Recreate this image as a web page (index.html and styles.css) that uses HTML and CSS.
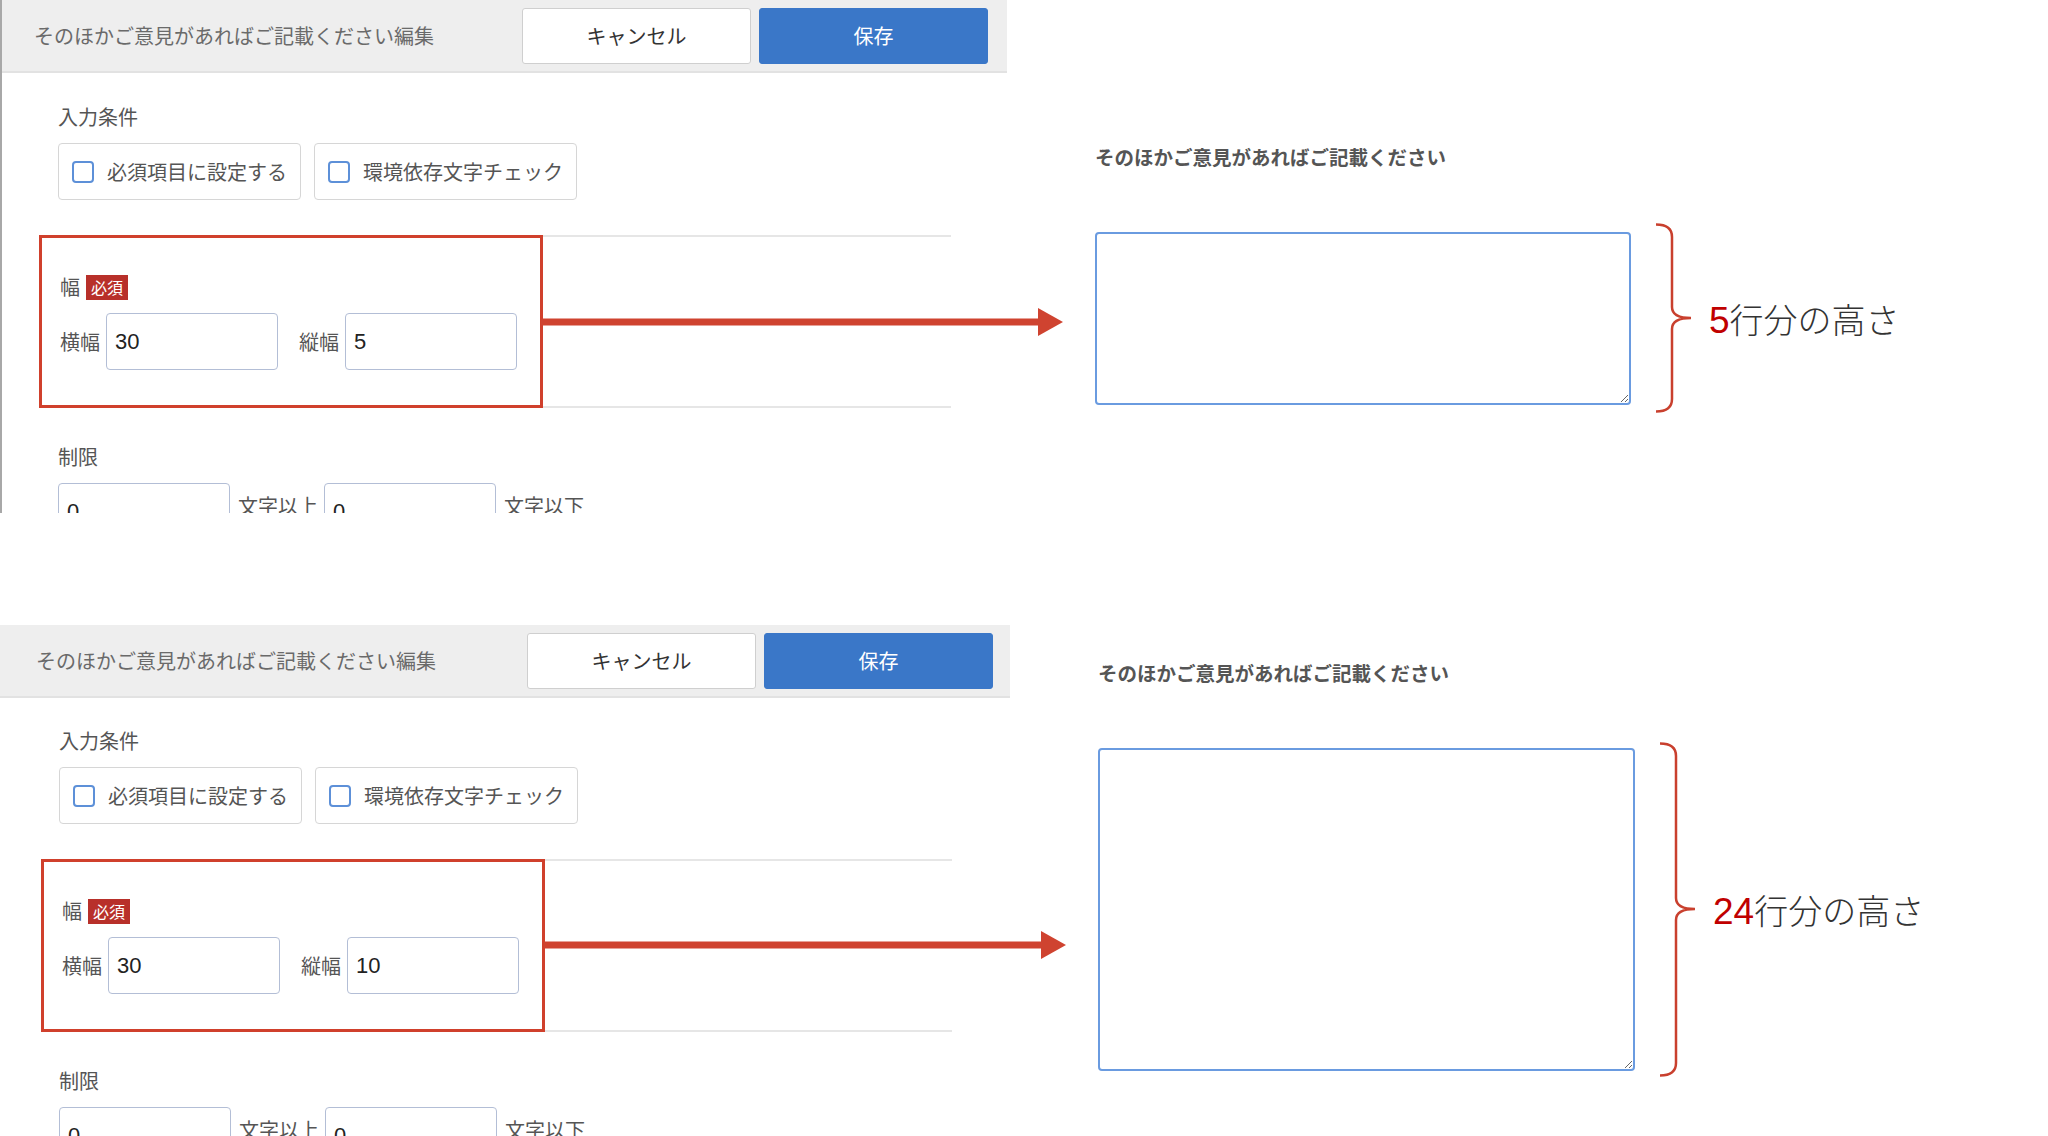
FILE: index.html
```html
<!DOCTYPE html>
<html lang="ja">
<head>
    <meta charset="UTF-8">
    <title>複数行テキストの幅と高さ</title>
    <link rel="stylesheet" href="styles.css">
</head>
<body>
    <main class="page">

        <!-- 縦幅 5 の場合 -->
        <section class="case">
            <div class="editor editor-framed">
                <div class="editor-head">
                    <span class="editor-title">そのほかご意見があればご記載ください編集</span>
                    <div class="head-actions">
                        <button class="btn btn-cancel">キャンセル</button>
                        <button class="btn btn-save">保存</button>
                    </div>
                </div>
                <div class="editor-body">
                    <div class="group-label">入力条件</div>
                    <div class="checks">
                        <label class="check"><span class="check-box"></span>必須項目に設定する</label>
                        <label class="check"><span class="check-box"></span>環境依存文字チェック</label>
                    </div>
                    <div class="size-row">
                        <div class="size-box">
                            <div class="size-title">幅<span class="req">必須</span></div>
                            <div class="size-fields">
                                <span class="field-label">横幅</span>
                                <input class="field" type="text" value="30">
                                <span class="field-label">縦幅</span>
                                <input class="field" type="text" value="5">
                            </div>
                        </div>
                    </div>
                    <div class="group-label group-limit">制限</div>
                    <div class="limit-fields">
                        <input class="field" type="text" value="0">
                        <span class="field-label">文字以上</span>
                        <input class="field" type="text" value="0">
                        <span class="field-label">文字以下</span>
                    </div>
                </div>
            </div>

            <div class="preview">
                <div class="preview-label">そのほかご意見があればご記載ください</div>
                <div class="preview-row">
                    <textarea class="preview-input"></textarea>
                    <svg class="brace" width="38" height="190" viewBox="0 0 38 190">
                        <path d="M1 1.5 Q17 1.5 17 14 V84 Q17 95 36 95 Q17 95 17 106 V176 Q17 188.5 1 188.5" />
                    </svg>
                    <div class="rows-note"><span class="rows-num">5</span>行分の高さ</div>
                </div>
            </div>

            <svg class="arrow" width="522" height="28" viewBox="0 0 522 28">
                <rect x="0" y="10.5" width="499" height="7" />
                <polygon points="497,0 522,14 497,28" />
            </svg>
        </section>

        <!-- 縦幅 10 の場合 -->
        <section class="case case-tall">
            <div class="editor">
                <div class="editor-head">
                    <span class="editor-title">そのほかご意見があればご記載ください編集</span>
                    <div class="head-actions">
                        <button class="btn btn-cancel">キャンセル</button>
                        <button class="btn btn-save">保存</button>
                    </div>
                </div>
                <div class="editor-body">
                    <div class="group-label">入力条件</div>
                    <div class="checks">
                        <label class="check"><span class="check-box"></span>必須項目に設定する</label>
                        <label class="check"><span class="check-box"></span>環境依存文字チェック</label>
                    </div>
                    <div class="size-row">
                        <div class="size-box">
                            <div class="size-title">幅<span class="req">必須</span></div>
                            <div class="size-fields">
                                <span class="field-label">横幅</span>
                                <input class="field" type="text" value="30">
                                <span class="field-label">縦幅</span>
                                <input class="field" type="text" value="10">
                            </div>
                        </div>
                    </div>
                    <div class="group-label group-limit">制限</div>
                    <div class="limit-fields">
                        <input class="field" type="text" value="0">
                        <span class="field-label">文字以上</span>
                        <input class="field" type="text" value="0">
                        <span class="field-label">文字以下</span>
                    </div>
                </div>
            </div>

            <div class="preview">
                <div class="preview-label">そのほかご意見があればご記載ください</div>
                <div class="preview-row">
                    <textarea class="preview-input"></textarea>
                    <svg class="brace" width="38" height="335" viewBox="0 0 38 335">
                        <path d="M1 1.5 Q17 1.5 17 14 V156 Q17 167 36 167 Q17 167 17 178 V321 Q17 333.5 1 333.5" />
                    </svg>
                    <div class="rows-note"><span class="rows-num">24</span>行分の高さ</div>
                </div>
            </div>

            <svg class="arrow" width="522" height="28" viewBox="0 0 522 28">
                <rect x="0" y="10.5" width="499" height="7" />
                <polygon points="497,0 522,14 497,28" />
            </svg>
        </section>

    </main>
</body>
</html>
```

FILE: styles.css
```css
/* General */
body {
    margin: 0;
    padding: 0;
    height: 1136px;
    overflow: hidden;
    background: #fff;
    font-family: "Noto Sans CJK JP", sans-serif;
    color: #555;
}

.page {
    display: flex;
    flex-direction: column;
    gap: 112px;
}

.case {
    position: relative;
    display: flex;
    height: 513px;
}

.case-tall {
    height: 520px;
}

/* Editor screenshot */
.editor {
    width: 1007px;
    flex-shrink: 0;
    overflow: hidden;
    box-sizing: border-box;
}

.editor-framed {
    border-left: 2px solid #a8a8a8;
}

.case-tall .editor {
    width: 1010px;
}

.editor-head {
    display: flex;
    align-items: center;
    justify-content: space-between;
    height: 71px;
    padding: 0 19px 0 32px;
    background: #eeeeee;
    border-bottom: 2px solid #e2e2e2;
}

.case-tall .editor-head {
    padding-left: 36px;
    padding-right: 17px;
}

.editor-title {
    font-size: 20px;
    color: #6a6a6a;
}

.head-actions {
    display: flex;
    gap: 8px;
}

.btn {
    width: 229px;
    height: 56px;
    font-family: inherit;
    font-size: 20px;
    border-radius: 3px;
    cursor: pointer;
}

.btn-cancel {
    background: #fff;
    color: #333;
    border: 1px solid #cfcfcf;
}

.btn-save {
    background: #3a77c8;
    color: #fff;
    border: 1px solid #3a77c8;
}

.editor-body {
    padding: 30px 0 0 56px;
}

.case-tall .editor-body {
    padding: 29px 0 0 59px;
}

.group-label {
    font-size: 20px;
    line-height: 28px;
    color: #555;
}

.checks {
    display: flex;
    gap: 13px;
    margin-top: 12px;
}

.check {
    display: flex;
    align-items: center;
    gap: 13px;
    height: 57px;
    padding: 0 13px;
    border: 1px solid #d6d6d6;
    border-radius: 4px;
    font-size: 20px;
    color: #555;
    box-sizing: border-box;
}

.check-box {
    width: 22px;
    height: 22px;
    border: 2px solid #5d90d8;
    border-radius: 4px;
    box-sizing: border-box;
}

/* Width / height section */
.size-row {
    width: 893px;
    margin-top: 35px;
    border-top: 2px solid #e6e6e6;
    border-bottom: 2px solid #e6e6e6;
}

.size-box {
    width: 504px;
    height: 173px;
    margin: -2px 0 -2px -19px;
    padding: 35px 0 0 18px;
    border: 3px solid #d0402c;
    box-sizing: border-box;
}

.case-tall .size-box {
    margin-left: -18px;
}

.size-title {
    display: flex;
    align-items: center;
    gap: 6px;
    font-size: 20px;
    line-height: 28px;
}

.req {
    display: inline-block;
    height: 25px;
    padding: 0 5px;
    background: #b8302a;
    color: #fff;
    font-size: 16px;
    line-height: 25px;
}

.size-fields,
.limit-fields {
    display: flex;
    align-items: center;
    margin-top: 12px;
}

.field-label {
    font-size: 20px;
    color: #555;
    white-space: nowrap;
}

.field {
    width: 172px;
    height: 57px;
    padding: 0 8px;
    border: 1.5px solid #b3bed6;
    border-radius: 4px;
    font-family: "Liberation Sans", sans-serif;
    font-size: 22px;
    color: #222;
    box-sizing: border-box;
    outline: none;
}

.size-fields .field {
    margin: 0 21px 0 6px;
}

.group-limit {
    margin-top: 35px;
}

.limit-fields {
    align-items: flex-start;
}

.limit-fields .field {
    margin-right: 8px;
}

.limit-fields .field-label {
    margin: 8px 6px 0 0;
}

/* Preview of the field */
.preview {
    padding: 143px 0 0 88px;
}

.case-tall .preview {
    padding: 34px 0 0 88px;
}

.preview-label {
    font-size: 19.5px;
    font-weight: bold;
    line-height: 28px;
    color: #555;
}

.preview-row {
    display: flex;
    align-items: center;
    margin-top: 52px;
}

.case-tall .preview-row {
    margin-top: 55px;
}

.preview-input {
    width: 536px;
    height: 173px;
    margin: 0;
    border: 2px solid #6a9be0;
    border-radius: 4px;
    box-sizing: border-box;
    background: #fff;
}

.case-tall .preview-input {
    width: 537px;
    height: 323px;
}

.brace {
    margin-left: 24px;
    flex-shrink: 0;
}

.brace path {
    fill: none;
    stroke: #c9402e;
    stroke-width: 2.5;
}

.rows-note {
    margin-left: 16px;
    font-size: 34px;
    font-weight: 300;
    color: #333;
    white-space: nowrap;
}

.rows-num {
    font-family: "Liberation Sans", sans-serif;
    font-size: 37px;
    color: #c00000;
}

/* Red arrow from the red box to the preview */
.arrow {
    position: absolute;
    left: 541px;
    top: 308px;
}

.case-tall .arrow {
    left: 544px;
    top: 306px;
}

.arrow rect,
.arrow polygon {
    fill: #cf4330;
}
```
